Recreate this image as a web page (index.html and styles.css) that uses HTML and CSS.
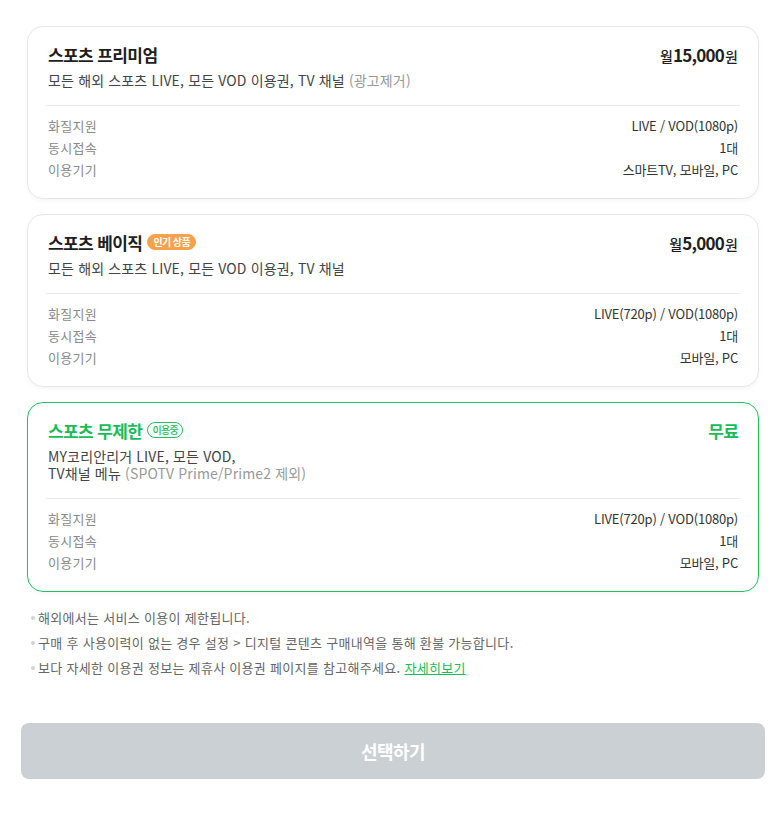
FILE: index.html
```html
<!DOCTYPE html>
<html lang="ko">
<head>
  <meta charset="utf-8">
  <link rel="stylesheet" href="styles.css">
</head>
<body>
  <div class="page">
    <h2 class="page-title">이용권 선택</h2>

    <div class="plans">
      <div class="plan">
        <div class="plan-head">
          <div class="plan-name">스포츠 프리미엄</div>
          <div class="plan-price"><span class="unit">월</span>15,000<span class="unit">원</span></div>
        </div>
        <div class="plan-desc">모든 해외 스포츠 LIVE, 모든 VOD 이용권, TV 채널 <span class="muted">(광고제거)</span></div>
        <div class="plan-info">
          <div class="info-row"><span class="info-label">화질지원</span><span class="info-value">LIVE / VOD(1080p)</span></div>
          <div class="info-row"><span class="info-label">동시접속</span><span class="info-value">1대</span></div>
          <div class="info-row"><span class="info-label">이용기기</span><span class="info-value">스마트TV, 모바일, PC</span></div>
        </div>
      </div>

      <div class="plan">
        <div class="plan-head">
          <div class="plan-name">스포츠 베이직 <span class="badge badge-hot">인기 상품</span></div>
          <div class="plan-price"><span class="unit">월</span>5,000<span class="unit">원</span></div>
        </div>
        <div class="plan-desc">모든 해외 스포츠 LIVE, 모든 VOD 이용권, TV 채널</div>
        <div class="plan-info">
          <div class="info-row"><span class="info-label">화질지원</span><span class="info-value">LIVE(720p) / VOD(1080p)</span></div>
          <div class="info-row"><span class="info-label">동시접속</span><span class="info-value">1대</span></div>
          <div class="info-row"><span class="info-label">이용기기</span><span class="info-value">모바일, PC</span></div>
        </div>
      </div>

      <div class="plan plan-active">
        <div class="plan-head">
          <div class="plan-name">스포츠 무제한 <span class="badge badge-using">이용중</span></div>
          <div class="plan-price">무료</div>
        </div>
        <div class="plan-desc">MY코리안리거 LIVE, 모든 VOD,<br>TV채널 메뉴 <span class="muted">(SPOTV Prime/Prime2 제외)</span></div>
        <div class="plan-info">
          <div class="info-row"><span class="info-label">화질지원</span><span class="info-value">LIVE(720p) / VOD(1080p)</span></div>
          <div class="info-row"><span class="info-label">동시접속</span><span class="info-value">1대</span></div>
          <div class="info-row"><span class="info-label">이용기기</span><span class="info-value">모바일, PC</span></div>
        </div>
      </div>
    </div>

    <ul class="notes">
      <li>해외에서는 서비스 이용이 제한됩니다.</li>
      <li>구매 후 사용이력이 없는 경우 설정 &gt; 디지털 콘텐츠 구매내역을 통해 환불 가능합니다.</li>
      <li>보다 자세한 이용권 정보는 제휴사 이용권 페이지를 참고해주세요. <a href="#" class="more">자세히보기</a></li>
    </ul>

    <button class="select-button" disabled>선택하기</button>
  </div>
</body>
</html>
```

FILE: styles.css
```css
body {
  margin: 0;
  background: #fff;
  font-family: "Noto Sans CJK KR", "Noto Sans", sans-serif;
  color: #222;
  overflow: hidden;
}

.page {
  width: 744px;
  padding-left: 21px;
}

.page-title {
  margin: -22px 0 22px;
  height: 26px;
  text-align: center;
  font-size: 20px;
  line-height: 20px;
  font-weight: 700;
  color: #444;
  letter-spacing: 6px;
}

.plans {
  display: flex;
  flex-direction: column;
  gap: 15px;
  margin: 0 6px;
}

.plan {
  border: 1px solid #e6e7ea;
  border-radius: 16px;
  padding: 13px 18px 17px;
  box-shadow: 0 2px 4px rgba(0, 0, 0, 0.04);
}

.plan-active {
  border-color: #1fc163;
}

.plan-head {
  display: flex;
  justify-content: space-between;
  align-items: center;
  padding: 0 2px;
  height: 28px;
}

.plan-name {
  font-size: 17px;
  font-weight: 700;
  letter-spacing: -0.6px;
  color: #1e1e1e;
  display: flex;
  align-items: center;
  gap: 5px;
}

.plan-active .plan-name,
.plan-active .plan-price {
  color: #17bd58;
}

.plan-price {
  font-size: 17px;
  font-weight: 700;
  letter-spacing: -0.8px;
  color: #1e1e1e;
}

.plan-price .unit {
  font-size: 14px;
  font-weight: 500;
  margin: 0 1px;
}

.badge {
  font-size: 10px;
  font-weight: 700;
  letter-spacing: -0.6px;
  line-height: 14px;
  padding: 0 5px;
  border-radius: 9px;
}

.badge-hot {
  background: #f6a24a;
  color: #fff;
  border: 1px solid #f6a24a;
}

.badge-using {
  border: 1px solid #1fc163;
  color: #17bd58;
  font-weight: 500;
  padding: 0 4px;
}

.plan-desc {
  padding: 0 2px;
  margin-top: 4px;
  font-size: 14px;
  line-height: 17px;
  letter-spacing: 0.15px;
  color: #444;
}

.muted {
  color: #999;
}

.plan-info {
  margin-top: 16px;
  border-top: 1px solid #ececef;
  padding: 9px 2px 0;
}

.info-row {
  display: flex;
  justify-content: space-between;
  font-size: 13px;
  line-height: 22px;
  letter-spacing: -0.2px;
}

.info-label {
  color: #8a8a8a;
  letter-spacing: 0.3px;
}

.info-value {
  color: #333;
}

.notes {
  list-style: none;
  margin: 13px 0 0;
  padding: 0 0 0 10px;
}

.notes li {
  position: relative;
  padding-left: 7px;
  font-size: 13px;
  line-height: 25px;
  letter-spacing: 0.3px;
  color: #666;
}

.notes li::before {
  content: "";
  position: absolute;
  left: 0;
  top: 11px;
  width: 4px;
  height: 4px;
  border-radius: 50%;
  background: #d4d4d4;
}

.more {
  color: #17bd58;
  text-decoration: underline;
}

.select-button {
  display: block;
  width: 744px;
  height: 56px;
  margin-top: 43px;
  border: none;
  border-radius: 8px;
  background: #cbd0d4;
  color: #fff;
  font-family: inherit;
  font-size: 18px;
  font-weight: 700;
  letter-spacing: -0.5px;
}
```
